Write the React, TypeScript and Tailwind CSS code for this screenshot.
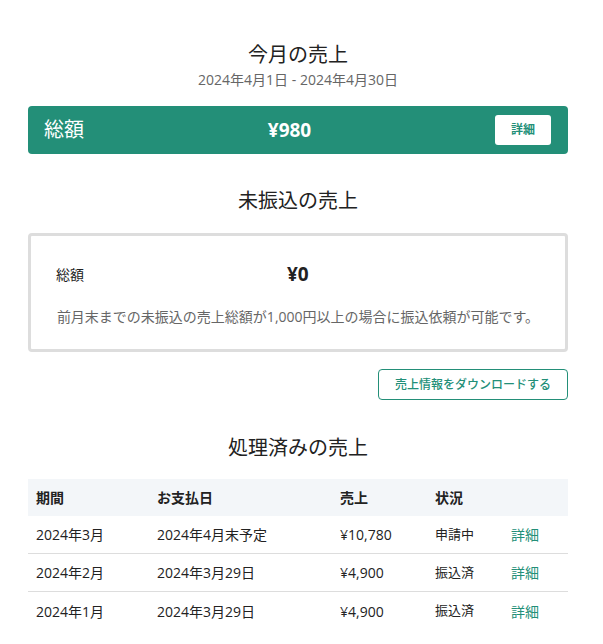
import React from 'react'

// ─── DATA ────────────────────────────────────────────────────────────────────

interface Row {
  period: string
  payDate: string
  amount: string
  status: string
}

const rows: Row[] = [
  { period: '2024年3月', payDate: '2024年4月末予定', amount: '¥10,780', status: '申請中' },
  { period: '2024年2月', payDate: '2024年3月29日', amount: '¥4,900', status: '振込済' },
  { period: '2024年1月', payDate: '2024年3月29日', amount: '¥4,900', status: '振込済' },
]

const font = { fontFamily: '"Open Sans", "Noto Sans CJK JP", sans-serif' }

const cols = 'grid grid-cols-[121px_183px_95px_76px_1fr] items-center pl-2'

// ─── PAGE ─────────────────────────────────────────────────────────────────────

export default function App() {
  return (
    <div style={font} className="min-h-[644px] bg-white text-[#222]">
      <div className="ml-[28px] w-[540px] pt-[41px]">

        {/* 今月の売上 */}
        <h1 className="text-center text-[20px] leading-[28px]">今月の売上</h1>
        <p className="text-center text-[14px] leading-[22px] text-[#666]">
          2024年4月1日 - 2024年4月30日
        </p>

        <div className="mt-[15px] flex h-[48px] items-center justify-between rounded-[4px] bg-[#238f78] pl-4 pr-[17px] text-white">
          <span className="text-[20px]">総額</span>
          <span className="text-[19px] font-bold">¥980</span>
          <button className="h-[30px] w-[56px] rounded-[3px] bg-white text-[12px] font-semibold text-[#238f78]">
            詳細
          </button>
        </div>

        {/* 未振込の売上 */}
        <h2 className="mt-[33px] text-center text-[20px] leading-[28px]">未振込の売上</h2>

        <div className="mt-[18px] h-[119px] rounded-[4px] border-[3px] border-[#dddddd] px-[25px] pt-[24px]">
          <div className="flex items-center">
            <span className="w-[231px] text-[14px]">総額</span>
            <span className="text-[19px] font-bold">¥0</span>
          </div>
          <p className="mt-[17px] text-center text-[14px] leading-[22px] text-[#666]">
            前月末までの未振込の売上総額が1,000円以上の場合に振込依頼が可能です。
          </p>
        </div>

        <div className="mt-[17px] flex justify-end">
          <button className="h-[31px] w-[190px] rounded-[4px] border border-[#238f78] text-[12px] font-medium text-[#238f78]">
            売上情報をダウンロードする
          </button>
        </div>

        {/* 処理済みの売上 */}
        <h2 className="mt-[34px] text-center text-[20px] leading-[28px]">処理済みの売上</h2>

        <div className="mt-[17px] text-[14px]">
          <div className={`${cols} h-[37px] bg-[#f3f6f9] font-bold`}>
            <span>期間</span>
            <span>お支払日</span>
            <span>売上</span>
            <span>状況</span>
            <span />
          </div>
          {rows.map((r, i) => (
            <div
              key={r.period}
              className={`${cols} h-[38px] ${i < rows.length - 1 ? 'border-b border-[#dddddd]' : ''}`}
            >
              <span>{r.period}</span>
              <span>{r.payDate}</span>
              <span>{r.amount}</span>
              <span className="text-[13px]">{r.status}</span>
              <span className="text-[#238f78]">詳細</span>
            </div>
          ))}
        </div>
      </div>
    </div>
  )
}
